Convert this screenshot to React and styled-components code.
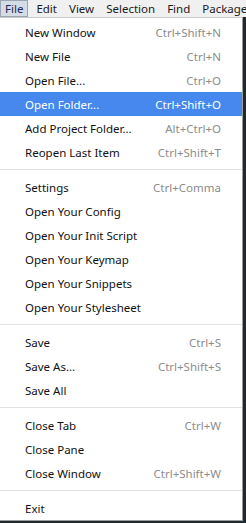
import styled, { createGlobalStyle } from 'styled-components';

const GlobalStyle = createGlobalStyle`
    html, body {
        margin: 0;
        padding: 0;
        background: #1e2a2f;
    }
    body {
        width: 246px;
        height: 523px;
        overflow: hidden;
        font-family: "Noto Sans", "Open Sans", sans-serif;
        font-size: 11.5px;
    }
`;

const Screen = styled.div`
    display: flex;
    flex-direction: column;
    width: 246px;
    height: 523px;
`;

const MenuBar = styled.div`
    display: flex;
    align-items: stretch;
    height: 17px;
    background: #f0f0f0;
    white-space: nowrap;
    overflow: hidden;
`;

const BarItem = styled.div`
    display: flex;
    align-items: center;
    flex-shrink: 0;
    padding: 0 6px;
    line-height: 15px;
    color: #1a1a1a;
`;

const OpenBarItem = styled(BarItem)`
    padding: 0 4px;
    margin-right: 2px;
    border: 1px solid #9aa6b2;
    background: #d4dde6;
    color: #1c2a5a;
`;

const Dropdown = styled.div`
    width: 243px;
    box-sizing: border-box;
    background: #fff;
    border-top: 1px solid #c8c8c8;
    border-right: 1px solid #9c9c9c;
    border-bottom: 1px solid #9c9c9c;
    padding: 2px 0 0;
`;

const Item = styled.div`
    display: flex;
    align-items: center;
    justify-content: space-between;
    height: 24px;
    padding: 0 21px 0 25px;
    background: ${p => (p.$active ? '#4688ee' : 'transparent')};
    color: ${p => (p.$active ? '#fff' : '#111')};
    white-space: nowrap;
`;

const Shortcut = styled.span`
    color: ${p => (p.$active ? '#fff' : '#8c8c8c')};
`;

const Separator = styled.div`
    height: 11px;
    display: flex;
    align-items: center;

    &::after {
        content: '';
        flex: 1;
        height: 1px;
        background: #e2e2e2;
    }
`;

const menus = ['Edit', 'View', 'Selection', 'Find', 'Packages'];

const groups = [
    [
        ['New Window', 'Ctrl+Shift+N'],
        ['New File', 'Ctrl+N'],
        ['Open File...', 'Ctrl+O'],
        ['Open Folder...', 'Ctrl+Shift+O', true],
        ['Add Project Folder...', 'Alt+Ctrl+O'],
        ['Reopen Last Item', 'Ctrl+Shift+T'],
    ],
    [
        ['Settings', 'Ctrl+Comma'],
        ['Open Your Config'],
        ['Open Your Init Script'],
        ['Open Your Keymap'],
        ['Open Your Snippets'],
        ['Open Your Stylesheet'],
    ],
    [
        ['Save', 'Ctrl+S'],
        ['Save As...', 'Ctrl+Shift+S'],
        ['Save All'],
    ],
    [
        ['Close Tab', 'Ctrl+W'],
        ['Close Pane'],
        ['Close Window', 'Ctrl+Shift+W'],
    ],
    [
        ['Exit'],
    ],
];

const App = () => {
    return (
        <Screen>
            <GlobalStyle />
            <MenuBar>
                <OpenBarItem>File</OpenBarItem>
                {menus.map(m => (
                    <BarItem key={m}>{m}</BarItem>
                ))}
            </MenuBar>
            <Dropdown>
                {groups.map((group, gi) => (
                    <div key={gi}>
                        {gi > 0 && <Separator />}
                        {group.map(([label, keys, active]) => (
                            <Item key={label} $active={active}>
                                <span>{label}</span>
                                {keys && <Shortcut $active={active}>{keys}</Shortcut>}
                            </Item>
                        ))}
                    </div>
                ))}
            </Dropdown>
        </Screen>
    );
};

export default App;
